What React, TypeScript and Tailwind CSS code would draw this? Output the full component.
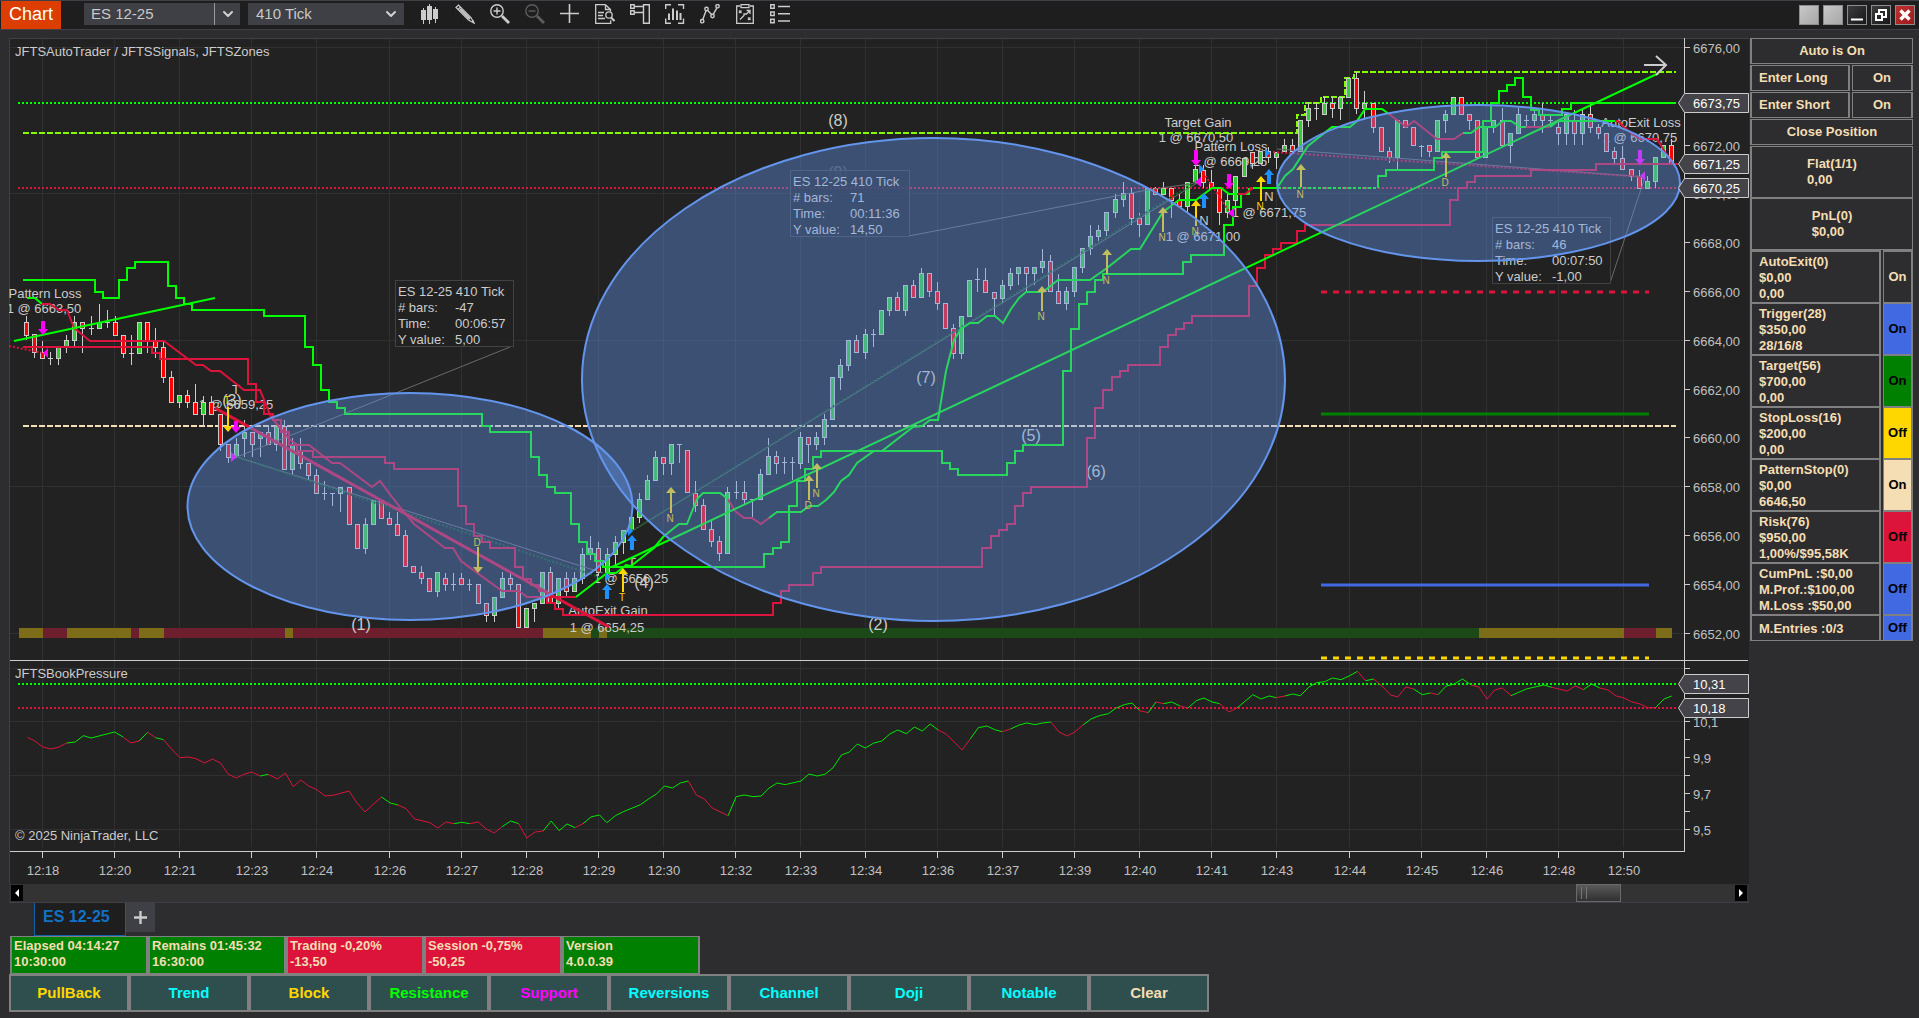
import type { ReactNode } from 'react';
import { ChevronDown } from 'lucide-react';

type Candle = [kind: 'g' | 'r', high: number, top: number, bottom: number, low: number];

const FIRST_BAR = 26.5;
const BAR_STEP = 8.063;

const LIME = '#00ff00';
const CRIMSON = '#dc143c';
const SILVER = '#cccccc';
const GOLD = '#ffd700';

const candles: Candle[] = [
  ['r', 316, 322, 335, 340], ['r', 334, 334, 352, 358], ['r', 341, 352, 358, 358], ['r', 352, 358, 358, 365],
  ['g', 347, 347, 358, 365], ['g', 335, 340, 347, 353], ['g', 316, 322, 340, 347], ['r', 322, 322, 328, 353],
  ['r', 316, 328, 328, 335], ['g', 304, 322, 328, 328], ['r', 310, 322, 322, 328], ['r', 316, 322, 335, 335],
  ['r', 335, 335, 353, 358], ['r', 335, 353, 353, 365], ['g', 322, 322, 353, 353], ['r', 322, 322, 341, 353],
  ['r', 328, 341, 347, 358], ['r', 341, 347, 377, 383], ['r', 371, 377, 402, 402], ['g', 395, 395, 402, 408],
  ['r', 390, 395, 402, 408], ['r', 384, 402, 414, 414], ['g', 396, 402, 414, 426], ['r', 396, 402, 414, 414],
  ['r', 414, 414, 444, 451], ['r', 444, 444, 457, 463], ['g', 438, 444, 457, 457], ['g', 420, 432, 438, 457],
  ['r', 432, 432, 444, 457], ['g', 432, 432, 438, 457], ['r', 426, 432, 444, 444], ['g', 426, 426, 444, 451],
  ['r', 420, 426, 469, 469], ['g', 438, 444, 469, 475], ['r', 438, 451, 463, 469], ['r', 463, 463, 475, 480],
  ['r', 469, 475, 493, 493], ['r', 481, 493, 493, 500], ['r', 493, 493, 493, 506], ['g', 487, 487, 493, 512],
  ['r', 487, 487, 524, 524], ['r', 524, 524, 548, 548], ['g', 518, 524, 548, 554], ['g', 500, 500, 524, 524],
  ['r', 500, 500, 518, 518], ['r', 512, 518, 524, 524], ['r', 512, 524, 535, 535], ['r', 530, 535, 566, 566],
  ['r', 566, 566, 572, 572], ['r', 566, 572, 578, 584], ['r', 578, 578, 591, 591], ['g', 572, 572, 591, 597],
  ['r', 573, 578, 584, 591], ['r', 573, 584, 584, 591], ['r', 573, 578, 584, 584], ['r', 579, 584, 584, 591],
  ['r', 584, 584, 603, 603], ['r', 603, 603, 615, 622], ['g', 597, 597, 615, 622], ['g', 572, 578, 597, 597],
  ['r', 573, 578, 584, 591], ['r', 584, 584, 627, 627], ['g', 608, 608, 627, 627], ['g', 603, 603, 608, 622],
  ['g', 572, 572, 603, 603], ['r', 567, 572, 603, 603], ['g', 578, 578, 603, 608], ['r', 572, 578, 591, 597],
  ['g', 572, 578, 591, 591], ['g', 548, 554, 578, 584], ['g', 536, 548, 554, 560], ['r', 542, 548, 572, 578],
  ['g', 548, 554, 572, 577], ['g', 536, 542, 554, 565], ['g', 530, 530, 542, 554], ['g', 517, 517, 530, 530],
  ['g', 493, 499, 517, 523], ['g', 475, 480, 499, 499], ['g', 451, 457, 480, 480], ['r', 457, 457, 463, 475],
  ['g', 444, 444, 463, 475], ['r', 444, 444, 444, 463], ['r', 450, 450, 492, 492], ['r', 481, 493, 505, 512],
  ['r', 499, 505, 529, 529], ['r', 520, 529, 541, 547], ['r', 536, 541, 553, 561], ['g', 487, 492, 553, 553],
  ['r', 481, 492, 492, 499], ['r', 481, 492, 499, 505], ['r', 499, 499, 499, 517], ['g', 469, 474, 499, 499],
  ['g', 438, 456, 474, 474], ['r', 451, 456, 463, 474], ['r', 457, 462, 462, 474], ['r', 457, 462, 462, 480],
  ['g', 432, 437, 463, 469], ['r', 437, 437, 444, 463], ['g', 432, 437, 444, 450], ['g', 414, 419, 437, 445],
  ['g', 377, 377, 419, 419], ['g', 359, 365, 377, 390], ['g', 340, 340, 365, 371], ['r', 335, 340, 352, 352],
  ['g', 329, 334, 352, 359], ['r', 329, 334, 334, 347], ['g', 310, 310, 334, 334], ['g', 297, 297, 310, 316],
  ['r', 292, 297, 310, 310], ['g', 285, 285, 310, 316], ['r', 280, 285, 297, 297], ['g', 268, 273, 297, 297],
  ['r', 273, 273, 291, 297], ['r', 282, 291, 303, 310], ['r', 303, 303, 328, 328], ['r', 324, 328, 353, 359],
  ['g', 316, 316, 353, 359], ['g', 280, 280, 316, 316], ['r', 268, 279, 279, 292], ['r', 268, 280, 292, 292],
  ['r', 292, 292, 298, 316], ['g', 280, 285, 298, 303], ['g', 268, 273, 285, 290], ['g', 267, 267, 273, 285],
  ['r', 267, 267, 273, 292], ['g', 267, 267, 273, 285], ['g', 249, 261, 267, 273], ['r', 255, 261, 291, 291],
  ['r', 274, 291, 303, 303], ['g', 287, 291, 303, 310], ['g', 267, 267, 291, 297], ['g', 248, 248, 267, 273],
  ['g', 225, 236, 248, 255], ['g', 225, 230, 236, 241], ['g', 212, 212, 230, 236], ['g', 194, 199, 212, 218],
  ['g', 182, 193, 199, 207], ['r', 188, 193, 218, 225], ['r', 213, 218, 224, 237], ['g', 188, 188, 224, 224],
  ['r', 187, 188, 194, 194], ['g', 182, 188, 194, 194], ['r', 188, 188, 200, 218], ['r', 194, 200, 206, 206],
  ['g', 182, 182, 206, 212], ['g', 165, 169, 182, 182], ['r', 165, 170, 182, 188], ['r', 170, 182, 188, 188],
  ['r', 188, 188, 212, 225], ['g', 194, 200, 212, 218], ['g', 176, 176, 200, 206], ['g', 158, 158, 176, 176],
  ['r', 152, 152, 163, 169], ['g', 151, 151, 163, 163], ['r', 147, 151, 157, 163], ['g', 152, 152, 157, 169],
  ['g', 139, 145, 151, 151], ['r', 139, 145, 151, 151], ['g', 120, 120, 151, 151], ['g', 103, 108, 120, 127],
  ['r', 103, 108, 108, 120], ['g', 97, 103, 114, 114], ['r', 97, 103, 108, 118], ['g', 97, 97, 108, 120],
  ['g', 78, 78, 97, 97], ['r', 72, 78, 108, 114], ['g', 91, 103, 108, 120], ['r', 103, 103, 127, 133],
  ['r', 127, 127, 151, 151], ['r', 147, 151, 157, 163], ['g', 120, 120, 157, 169], ['r', 120, 120, 127, 127],
  ['r', 127, 127, 145, 145], ['r', 145, 146, 146, 157], ['r', 145, 145, 151, 157], ['g', 120, 120, 151, 151],
  ['g', 110, 114, 120, 133], ['g', 97, 97, 114, 114], ['r', 97, 97, 114, 114], ['r', 114, 114, 120, 130],
  ['r', 120, 120, 157, 157], ['g', 126, 127, 157, 157], ['g', 120, 120, 127, 133], ['r', 108, 120, 145, 145],
  ['g', 133, 133, 145, 163], ['g', 108, 114, 133, 133], ['r', 115, 120, 120, 127], ['g', 108, 114, 120, 127],
  ['r', 103, 114, 120, 133], ['r', 114, 120, 120, 127], ['r', 122, 127, 133, 145], ['g', 114, 114, 133, 145],
  ['r', 110, 120, 133, 145], ['g', 108, 114, 133, 145], ['r', 103, 114, 127, 133], ['r', 124, 127, 133, 139],
  ['r', 133, 133, 151, 151], ['r', 147, 151, 158, 163], ['r', 146, 158, 169, 169], ['r', 169, 169, 176, 181],
  ['r', 170, 176, 188, 188], ['g', 176, 181, 188, 188], ['g', 157, 157, 181, 188], ['g', 145, 145, 157, 157],
  ['r', 139, 145, 163, 163],
];

const upperBand =
  'M23 280H95V292H103V298H119V280H127V268H135V262H168V286H176V298H184V304H192V310H264V316H305V347H313V365H321V390H329V402H337V408H345V414H482V426H490V432H531V457H539V475H547V487H555V493H571V524H579V542H587V554H595V561H603V567H764V554H773V548H781V542H789V506H797V481H805V469H813V457H821V451H942V463H950V469H958V475H1007V463H1015V451H1023V445H1063V371H1071V329H1079V304H1087V292H1095V280H1103V274H1183V262H1191V255H1224V225H1233V207H1241V194H1249V188';
const upperBandEnd =
  'M1378 188V176H1386V170H1434V158H1442V152H1483V121H1491V103H1499V91H1507V85H1515V78H1523V97H1531V110H1539V115H1562V109H1571V103H1676';
const lowerBand =
  'M23 347H152V353H160V359H248V384H256V402H264V414H273V420H281V432H289V445H297V451H313V457H385V463H394V469H458V506H466V524H474V536H482V542H490V548H515V567H523V579H531V585H539V591H547V603H555V609H563V615H773V603H781V591H789V585H813V573H821V567H982V548H991V536H999V530H1007V524H1015V506H1023V493H1031V487H1087V438H1095V408H1103V390H1112V377H1120V371H1128V365H1160V347H1168V335H1176V329H1184V323H1192V316H1249V286H1257V268H1265V255H1273V249H1281V243H1297V231H1305V225H1450V200H1458V188H1467V182H1475V176H1531V170H1596V164H1678';

// Moving average, coloured by direction
const average: [string, string][] = [
  [LIME, '27,298 35,298 42,304'],
  [CRIMSON, '42,304 50,304 59,310 67,310 74,328 90,341 164,341 196,365 203,365 211,371 220,371 244,390 260,390 271,417 290,440 298,445 309,445 332,463 340,463 372,487 380,481 392,497 400,507 414,524 445,548 453,548 461,561 502,591 519,591 527,597 576,597'],
  [LIME, '576,597 607,573 616,573 626,565 631,566 654,548 663,537 679,524 687,524 697,499 703,493 720,493 728,499'],
  [CRIMSON, '728,499 735,511 744,518 752,518 761,524 769,518'],
  [LIME, '769,518 777,512 801,512 809,506 818,506 826,500 834,492 841,481 849,475 857,463 874,451 882,451 913,427 922,426 930,420 938,420 946,371 954,340 961,329 970,323 978,323 987,316 995,316 1003,323 1011,309 1019,298 1026,292 1043,292 1058,280 1090,280 1107,268 1131,249 1140,249 1163,212 1179,200 1196,200 1212,188 1221,188 1229,194 1237,194'],
  [CRIMSON, '1237,194 1245,194 1253,188'],
  [LIME, '1253,188 1277,188 1285,176 1293,169 1308,146 1332,127 1350,127 1357,121 1365,109 1382,109 1389,114'],
  [CRIMSON, '1389,114 1406,127 1414,121 1437,139 1454,139 1463,133'],
  [LIME, '1463,133 1471,133 1479,127 1495,127 1503,121 1511,121 1520,127 1526,127'],
  [CRIMSON, '1526,127 1550,127'],
  [LIME, '1550,127 1558,121 1615,121'],
  [CRIMSON, '1615,121 1618,121 1624,127 1631,133 1640,139 1657,139 1665,152 1673,163'],
];

// Two halves of the pressure series, each in its own sample units
const pressureLeft: ['g' | 'r', string][] = [
  ['r', '45,292 57,303 70,321 83,327 95,322 109,309'],
  ['g', '109,309 123,306 136,287 149,294 187,276 201,291'],
  ['r', '201,291 214,309 227,303'],
  ['g', '227,303 241,277'],
  ['r', '241,277 254,293'],
  ['g', '254,293 267,299'],
  ['r', '267,299 280,327 294,353 307,351 320,356 334,369 347,357 360,369 373,403 386,414 398,403 411,396 425,408'],
  ['g', '425,408 438,403'],
  ['r', '438,403 453,417 466,399 479,440 491,420 504,438 518,450 531,468 544,466 570,453 583,489 596,516 610,492 623,471'],
  ['g', '623,471 637,489 650,495'],
  ['r', '650,495 663,506 677,537 702,548 715,564 728,546 741,551'],
  ['g', '741,551 754,547 767,551'],
  ['r', '767,551 781,546 794,567 807,579 820,560'],
  ['g', '820,560 834,543 847,551'],
  ['r', '847,551 860,594 874,576 887,573'],
  ['g', '887,573 900,543 913,572 926,552 939,563'],
  ['r', '939,563 952,551'],
  ['g', '952,551 965,531 979,525 991,548 1005,527 1018,515 1046,494 1059,477 1072,462 1085,438 1098,444 1111,429 1124,423'],
  ['r', '1124,423 1137,465 1150,477 1163,504 1189,527'],
  ['g', '1189,527 1202,470 1215,465 1230,470 1243,468 1256,444 1269,429 1282,434 1308,423 1321,402 1334,408 1347,403 1360,384 1374,345 1387,336 1400,312 1413,324 1427,309 1440,303 1453,282 1466,270 1480,281 1493,261 1506,273 1519,252 1532,270'],
  ['r', '1532,270 1545,282 1571,330'],
];
const pressureRight: ['g' | 'r', string][] = [
  ['r', '4,330 20,297'],
  ['g', '20,297 36,263 53,258 68,269 83,275'],
  ['r', '83,275 99,267'],
  ['g', '99,267 116,255 131,249 147,254 162,249 178,246'],
  ['r', '178,246 194,276 210,288 225,276 241,255'],
  ['g', '241,255 257,237 273,227 291,221 305,205 322,194 337,189 352,212'],
  ['r', '352,212 369,218'],
  ['g', '369,218 384,186'],
  ['r', '384,186 399,191'],
  ['g', '399,191 415,186 431,198'],
  ['r', '431,198 447,204'],
  ['g', '447,204 463,182 478,174 494,186 509,191'],
  ['r', '509,191 527,216 543,204'],
  ['g', '543,204 574,164 590,177 606,168 620,173'],
  ['r', '620,173 637,168'],
  ['g', '637,168 652,162 667,167 684,141 699,128 715,125 730,114 747,119 764,107 779,94'],
  ['r', '779,94 795,122'],
  ['g', '795,122 811,117'],
  ['r', '811,117 827,138 844,165 858,171 874,141 889,147'],
  ['g', '889,147 906,164 922,159'],
  ['r', '922,159 937,164'],
  ['g', '937,164 953,138 969,132 985,117 1002,135'],
  ['r', '1002,135 1017,141 1033,177 1048,150 1063,144 1080,167'],
  ['g', '1080,167 1110,147 1144,135 1160,142'],
  ['r', '1160,142 1190,153 1206,138 1222,149'],
  ['g', '1222,149 1238,132 1254,144'],
  ['r', '1254,144 1270,150 1286,168 1300,173 1316,185 1333,192 1348,203 1363,203'],
  ['g', '1363,203 1380,177 1395,168'],
];

const times: [number, string][] = [
  [42.5, '12:18'], [114.5, '12:20'], [179.5, '12:21'], [251.5, '12:23'], [316.5, '12:24'], [389.5, '12:26'],
  [461.5, '12:27'], [526.5, '12:28'], [598.5, '12:29'], [663.5, '12:30'], [735.5, '12:32'], [800.5, '12:33'],
  [865.5, '12:34'], [937.5, '12:36'], [1002.5, '12:37'], [1074.5, '12:39'], [1139.5, '12:40'], [1211.5, '12:41'],
  [1276.5, '12:43'], [1349.5, '12:44'], [1421.5, '12:45'], [1486.5, '12:46'], [1558.5, '12:48'], [1623.5, '12:50'],
];

const prices: [number, string][] = [
  [47.5, '6676,00'], [96.5, '6674,00'], [145.5, '6672,00'], [193.5, '6670,00'], [242.5, '6668,00'],
  [291.5, '6666,00'], [340.5, '6664,00'], [389.5, '6662,00'], [437.5, '6660,00'], [486.5, '6658,00'],
  [535.5, '6656,00'], [584.5, '6654,00'], [633.5, '6652,00'],
];

const pressureTicks: [number, string][] = [
  [668.5, ''], [721.5, '10,1'], [739.5, ''], [757.5, '9,9'], [775.5, ''], [793.5, '9,7'], [811.5, ''], [829.5, '9,5'],
];

const tags: [number, string][] = [
  [103, '6673,75'], [164, '6671,25'], [188, '6670,25'], [684, '10,31'], [708, '10,18'],
];

const zones: [number, number, string][] = [
  [19, 43, '#7d6c18'], [43, 67, '#6e1f2d'], [67, 131, '#7d6c18'], [131, 139, '#6e1f2d'], [139, 164, '#7d6c18'],
  [164, 285, '#6e1f2d'], [285, 293, '#7d6c18'], [293, 543, '#6e1f2d'], [543, 591, '#7d6c18'], [591, 599, '#1b4a18'],
  [599, 607, '#7d6c18'], [607, 1479, '#1b4a18'], [1479, 1624, '#7d6c18'], [1624, 1656, '#6e1f2d'], [1656, 1672, '#7d6c18'],
];

const tradeLabels: [number, number, string][] = [
  [45, 298, 'Pattern Loss'], [44, 313, '1 @ 6663,50'], [236, 409, '1 @ 6659,25'], [236, 394, 'T'],
  [631, 583, '1 @ 6656,25'], [608, 615, 'AutoExit Gain'], [607, 632, '1 @ 6654,25'], [632, 567, 'T'],
  [1198, 127, 'Target Gain'], [1196, 142, '1 @ 6670,50'], [1231, 151, 'Pattern Loss'], [1230, 166, '1 @ 6669,25'],
  [1269, 217, '1 @ 6671,75'], [1203, 241, '1 @ 6671,00'], [1204, 225, 'N'], [1269, 201, 'N'],
  [1641, 127, 'AutoExit Loss'], [1640, 142, '1 @ 6670,75'],
];

const zoneNumbers: [number, number, string][] = [
  [361, 630, '(1)'], [878, 630, '(2)'], [232, 406, '(3)'], [644, 588, '(4)'],
  [1031, 441, '(5)'], [1096, 477, '(6)'], [926, 383, '(7)'], [838, 126, '(8)'],
];

const setups: [x: number, tip: number, tail: number, letterY: number, letter: string][] = [
  [228, 432, 407, 404, 'T'], [478, 573, 547, 546, 'D'], [623, 568, 592, 601, 'T'], [671, 487, 513, 522, 'N'],
  [809, 475, 500, 509, 'D'], [817, 463, 488, 497, 'N'], [1042, 286, 311, 320, 'N'], [1107, 249, 274, 284, 'N'],
  [1163, 207, 232, 241, 'N'], [1196, 200, 226, 235, 'N'], [1261, 176, 201, 210, 'N'], [1301, 164, 187, 198, 'N'],
  [1446, 152, 177, 186, 'D'],
];

const entries: [x: number, tip: number, tail: number, color: string][] = [
  [43, 335, 321, '#ff00ff'], [236, 433, 421, '#ff00ff'], [1196, 166, 150, '#ff00ff'], [1229, 189, 174, '#ff00ff'],
  [1640, 165, 150, '#ff00ff'], [632, 535, 550, '#1e90ff'], [607, 584, 599, '#1e90ff'], [1204, 193, 208, '#1e90ff'],
  [1269, 169, 184, '#1e90ff'],
];

const measures: { x: number; y: number; w: number; bars: string; time: string; value: string }[] = [
  { x: 395, y: 280, w: 118, bars: '-47', time: '00:06:57', value: '5,00' },
  { x: 790, y: 170, w: 119, bars: '71', time: '00:11:36', value: '14,50' },
  { x: 1492, y: 217, w: 118, bars: '46', time: '00:07:50', value: '-1,00' },
];

const SetupArrow = ({ x, tip, tail }: { x: number; tip: number; tail: number }) => {
  const d = tip < tail ? 1 : -1;
  return <path d={`M${x} ${tip}l5 ${6 * d}h-4V${tail}h-2V${tip + 6 * d}h-4z`} fill={GOLD} />;
};

const EntryArrow = ({ x, tip, tail, color }: { x: number; tip: number; tail: number; color: string }) => {
  const d = tip < tail ? 1 : -1;
  return <path d={`M${x} ${tip}l5 ${6 * d}h-3V${tail}h-4V${tip + 6 * d}h-3z`} fill={color} />;
};

const Chart = () => (
  <svg viewBox="9 38 1740 846" className="block h-auto w-full bg-[#222222] font-['Liberation_Sans',Arial,sans-serif] text-[13px]">
    {/* grid */}
    <g stroke="#303032" shapeRendering="crispEdges">
      {times.map(([x]) => <line key={x} x1={x} x2={x} y1={38} y2={847} />)}
      {[47.5, 193.5, 340.5, 486.5, 633.5, 668.5, 721.5, 775.5, 829.5].map((y) => (
        <line key={y} x1={10} x2={1684} y1={y} y2={y} />
      ))}
    </g>
    <path d="M9.500 884V38.500H1749" fill="none" stroke="#3f3f46" />

    <g fill={SILVER}>
      <text x={15} y={56}>JFTSAutoTrader / JFTSSignals, JFTSZones</text>
      <text x={15} y={678}>JFTSBookPressure</text>
      <text x={15} y={840}>© 2025 NinjaTrader, LLC</text>
    </g>

    {/* trend strip */}
    <g shapeRendering="crispEdges">
      {zones.map(([from, to, color]) => <rect key={from} x={from} y={628} width={to - from} height={10} fill={color} />)}
    </g>

    <g fill={SILVER} textAnchor="middle">
      {tradeLabels.map(([x, y, label]) => <text key={`${x}-${y}`} x={x} y={y}>{label}</text>)}
    </g>
    <g fill={SILVER} textAnchor="middle" className="text-[16px]">
      {zoneNumbers.map(([x, y, label]) => <text key={label} x={x} y={y}>{label}</text>)}
      <text x={838} y={178} opacity={0.3}>(9)</text>
    </g>

    {/* levels */}
    <g fill="none" strokeWidth={2}>
      <path d="M18 103H1571" stroke={LIME} strokeDasharray="2 2" />
      <path d="M18 188H1676" stroke={CRIMSON} strokeDasharray="2 2" />
      <path d="M1253 188H1378" stroke={LIME} strokeDasharray="3 2" />
      <path d="M23 426H1676" stroke="#f5deb3" strokeDasharray="6 2" />
      <path d="M23 133H1297V115H1305V103H1321V97H1345V78H1354V72H1676" stroke="#7fff00" strokeDasharray="6 2" />
      <path d="M18 684H1678" stroke={LIME} strokeDasharray="2 2" />
      <path d="M18 708H1678" stroke={CRIMSON} strokeDasharray="2 2" />
    </g>
    <g fill="none" strokeWidth={3}>
      <path d="M1321 292H1649" stroke={CRIMSON} strokeDasharray="6 6" />
      <path d="M1321 414H1649" stroke="#008000" />
      <path d="M1321 585H1649" stroke="#4169e1" />
      <path d="M1321 658H1649" stroke={GOLD} strokeDasharray="6 6" />
    </g>

    {/* candles */}
    <g shapeRendering="crispEdges" stroke={SILVER}>
      {candles.map(([kind, high, top, bottom, low], i) => {
        const x = Math.floor(FIRST_BAR + BAR_STEP * i) + 0.5;
        if (top === bottom) {
          return <path key={i} d={`M${x} ${high}V${low}M${x - 2.5} ${top + 0.5}h5`} />;
        }
        return (
          <g key={i}>
            <path d={`M${x} ${high}V${low}`} />
            <rect x={x - 2} y={top + 0.5} width={4} height={bottom - top} fill={kind === 'g' ? '#32cd32' : '#ff0000'} />
          </g>
        );
      })}
    </g>

    {/* measuring rulers */}
    <g fill="none" stroke="#6a6a6a">
      <path d="M510 347L237 457L603 573M909 236L1147 190L1197 183L632 531M1610 283L1645 177L1277 149" />
    </g>
    <g fill="none" strokeWidth={2} strokeDasharray="2 2">
      <path d="M237 457L605 579M632 531L1197 181" stroke="#145c1e" />
      <path d="M9 346L43 353M1201 169L1230 213M1273 152L1645 177" stroke={CRIMSON} />
    </g>
    {measures.map((m) => (
      <g key={m.x} fill={SILVER}>
        <rect x={m.x + 0.5} y={m.y + 0.5} width={m.w} height={66} fill="#222222" fillOpacity={0.8} stroke="#424244" />
        <text x={m.x + 3} y={m.y + 16}>ES 12-25 410 Tick</text>
        <text x={m.x + 3} y={m.y + 32}># bars:</text>
        <text x={m.x + 60} y={m.y + 32}>{m.bars}</text>
        <text x={m.x + 3} y={m.y + 48}>Time:</text>
        <text x={m.x + 60} y={m.y + 48}>{m.time}</text>
        <text x={m.x + 3} y={m.y + 64}>Y value:</text>
        <text x={m.x + 60} y={m.y + 64}>{m.value}</text>
      </g>
    ))}

    {/* bands and averages */}
    <g fill="none" strokeWidth={2}>
      <path d={lowerBand} stroke={CRIMSON} />
      <path d={upperBand} stroke={LIME} />
      <path d={upperBandEnd} stroke={LIME} />
      {average.map(([color, points]) => <polyline key={points} points={points} stroke={color} />)}
      <path d="M14 341L215 298M612 567L1659 73" stroke={LIME} />
      <path d="M215 408L609 627" stroke={CRIMSON} strokeWidth={3} />
      <path d="M1644 65H1665M1656 56L1666 65L1656 75" stroke={SILVER} strokeWidth={2} />
    </g>

    {/* markers */}
    {setups.map(([x, tip, tail, letterY, letter]) => (
      <g key={`${x}-${tip}`}>
        <SetupArrow x={x} tip={tip} tail={tail} />
        <text x={x - 1} y={letterY} fill={GOLD} textAnchor="middle" className="text-[10px]">{letter}</text>
      </g>
    ))}
    {entries.map(([x, tip, tail, color]) => <EntryArrow key={`${x}-${tip}`} x={x} tip={tip} tail={tail} color={color} />)}
    <path d="M43 353l5 -5v10zM237 457l-6 -5v10zM1195 182l6 -5v10zM1228 213l6 -5v10zM1640 176l5 -5v10z" fill="#ff00ff" />
    <path d="M1204 169l-5 -5v10zM1270 153l-5 -5v10zM633 531l-5 -5v10zM610 577l-5 -5v10z" fill="#1e90ff" />

    {/* highlighted trades */}
    <g fill="#6495ed" fillOpacity={0.4} stroke="#6495ed" strokeWidth={2}>
      <ellipse cx={410} cy={506.5} rx={222.5} ry={113.5} />
      <ellipse cx={933.5} cy={379.5} rx={351.5} ry={241.5} />
      <ellipse cx={1478.5} cy={183} rx={201.5} ry={78} />
    </g>

    {/* book pressure */}
    <g fill="none" strokeWidth={1}>
      <g transform="translate(0 640) scale(0.6124 0.3333)">
        {pressureLeft.map(([kind, points]) => (
          <polyline key={points} points={points} vectorEffect="non-scaling-stroke" stroke={kind === 'g' ? '#00e800' : CRIMSON} />
        ))}
      </g>
      <g transform="translate(960 640) scale(0.5102 0.3333)">
        {pressureRight.map(([kind, points]) => (
          <polyline key={points} points={points} vectorEffect="non-scaling-stroke" stroke={kind === 'g' ? '#00e800' : CRIMSON} />
        ))}
      </g>
    </g>

    {/* axes */}
    <g stroke={SILVER} shapeRendering="crispEdges">
      <path d="M10 660.500H1748M10 851.500H1685M1684.500 38V852" />
      {[...prices, ...pressureTicks].map(([y]) => <path key={y} d={`M1684 ${y}h6`} />)}
      {times.map(([x]) => <path key={x} d={`M${x} 852v6`} />)}
    </g>
    <g fill="#c0c0c0">
      {[...prices, ...pressureTicks].map(([y, label]) => <text key={y} x={1693} y={y + 5.5}>{label}</text>)}
    </g>
    <g fill="#c0c0c0" textAnchor="middle">
      {times.map(([x, label]) => <text key={x} x={x + 0.5} y={875}>{label}</text>)}
    </g>
    {tags.map(([y, label]) => (
      <g key={label}>
        <path d={`M1678.500 ${y}l6 -9.500H1748.500v19H1684.500z`} fill="#434349" stroke={SILVER} />
        <text x={1693} y={y + 5} fill="#ffffff">{label}</text>
      </g>
    ))}
  </svg>
);

const tools: { label: string; dim?: boolean; icon: ReactNode }[] = [
  {
    label: 'Chart style',
    icon: <path fill="currentColor" d="M3 4h1v2h2v10H4v4H3v-4H1V6h2zM9 0h1v2h2v14h-2v4H9v-4H7V2h2zM15 3h1v2h2v10h-2v4h-1v-4h-2V5h2z" />,
  },
  {
    label: 'Drawing tools',
    icon: (
      <g>
        <path d="M1 3.500L3.500 1L16 13.500L19 19L13.500 16zM3 5.500L5.500 3" strokeWidth="1.200" />
        <path d="M5 5l10 10" strokeWidth="2" />
        <path d="M17 17.500l2.500 2.500l-1 -4z" fill="currentColor" />
      </g>
    ),
  },
  {
    label: 'Zoom in',
    icon: (
      <g>
        <circle cx="7" cy="7" r="6.200" strokeWidth="1.400" />
        <path d="M3.500 7h7M7 3.500v7" strokeWidth="1.400" />
        <path d="M12 12l7 7" strokeWidth="2.800" />
      </g>
    ),
  },
  {
    label: 'Zoom out',
    dim: true,
    icon: (
      <g>
        <circle cx="7" cy="7" r="6.200" strokeWidth="1.400" />
        <path d="M3.500 7h7" strokeWidth="1.400" />
        <path d="M12 12l7 7" strokeWidth="2.800" />
      </g>
    ),
  },
  { label: 'Cross hair', icon: <path d="M0 9.500h19M9.500 0v19" strokeWidth="1.600" /> },
  {
    label: 'Data box',
    icon: (
      <g strokeWidth="1.300">
        <path d="M10.500 .7H.7v18.600h15v-3M10.500 .7l5 4.800v2M10.500 .7v4.800h5" />
        <circle cx="14" cy="11" r="3.200" />
        <path d="M16 13.500l3.500 3.500" strokeWidth="2" />
        <path d="M3 8.500h6M3 11.500h5M3 14.500h7" />
      </g>
    ),
  },
  {
    label: 'Chart trader',
    icon: <path d="M.7 .7h3.500v3.500H.7zM.7 6.700h3.500v3.500H.7zM4 2.500h9M4 8.500h9M13.500 .7h5.800v18.600h-5.800z" strokeWidth="1.400" />,
  },
  {
    label: 'Data series',
    icon: (
      <g>
        <path d="M6 .7H.7V5M13 .7h5.500V5M.7 14.500v4.800H6M18.500 14.500v4.800H13" strokeWidth="1.400" />
        <path d="M4 16V9.500M8 16V4.500M12 16V6.500M15.500 16V9" strokeWidth="2" />
      </g>
    ),
  },
  {
    label: 'Indicators',
    icon: (
      <g strokeWidth="1.400">
        <circle cx="2.200" cy="17.200" r="1.700" />
        <circle cx="6.500" cy="5" r="1.700" />
        <circle cx="12.500" cy="12" r="1.700" />
        <circle cx="17.500" cy="2.200" r="1.700" />
        <path d="M2.800 15.500L6 6.700M7.500 6.300l4 4.300M13.200 10.400l3.700 -6.600" />
      </g>
    ),
  },
  {
    label: 'Strategies',
    icon: (
      <g strokeWidth="1.300">
        <path d="M5 2H1.700v17.300h16.600V2H15M6 .7h8v3H6z" />
        <path d="M4 6.500l2.500 2.500M6.500 6.500L4 9M13 13.500l2.500 2.500M15.500 13.500L13 16M5 15.500l4 -4v-1.500h2.500L14.500 7M11.500 6.500h3.500v3.500" />
      </g>
    ),
  },
  {
    label: 'Properties',
    icon: <path d="M.7 .7h3.500v3.500H.7zM.7 8h3.500v3.500H.7zM.7 15.300h3.500v3.500H.7zM8 2.500h12M8 9.700h12M8 17h12" strokeWidth="1.400" />,
  },
];

const Toolbar = () => (
  <header className="flex h-[30px] border-y border-[#3f3f46] bg-[#1e1e1e] pl-px">
    <h1 className="flex w-[60px] items-center justify-center bg-[#dc3d00] pb-[2px] text-lg leading-5 text-white">Chart</h1>
    <div className="mb-[2px] flex flex-1 items-center">
      <div className="relative ml-[23px]">
        <select aria-label="Instrument" className="block h-[22px] w-[156px] appearance-none bg-[#3f3f46] pl-[7px] text-[15px] leading-5 text-[#c8c8c8]">
          <option>ES 12-25</option>
        </select>
        <span className="pointer-events-none absolute inset-y-0 right-0 flex w-[26px] items-center justify-center border-l border-[#999999] text-[#d0d0d0]">
          <ChevronDown className="h-4 w-4" strokeWidth={3} />
        </span>
      </div>
      <div className="relative ml-2">
        <select aria-label="Interval" className="block h-[22px] w-[156px] appearance-none bg-[#3f3f46] pl-2 text-[15px] leading-5 text-[#c8c8c8]">
          <option>410 Tick</option>
        </select>
        <span className="pointer-events-none absolute inset-y-0 right-0 flex w-[26px] items-center justify-center text-[#d0d0d0]">
          <ChevronDown className="h-4 w-4" strokeWidth={3} />
        </span>
      </div>
      <div className="ml-[16px] flex gap-[15px]">
        {tools.map((tool) => (
          <button key={tool.label} aria-label={tool.label} className={tool.dim ? 'text-[#5c5c5c]' : 'text-[#cccccc]'}>
            <svg viewBox="0 0 20 20" className="block h-5 w-5" fill="none" stroke="currentColor" strokeWidth="0">
              {tool.icon}
            </svg>
          </button>
        ))}
      </div>
      <div className="mt-px mr-1 ml-auto flex gap-1">
        <button aria-label="Link instrument" className="h-5 w-5 border border-[#8c8c8c] bg-gradient-to-br from-[#c8c8c8] to-[#a8a6a8]" />
        <button aria-label="Link interval" className="h-5 w-5 border border-[#8c8c8c] bg-gradient-to-br from-[#c8c8c8] to-[#a8a6a8]" />
        <button aria-label="Minimize" className="h-5 w-5 border border-[#8c8c8c] bg-gradient-to-br from-[#3c3c3e] to-[#18181a]">
          <svg viewBox="0 0 18 18" className="block h-full w-full"><path d="M3 13.500h12" stroke="#fff" strokeWidth="2" /></svg>
        </button>
        <button aria-label="Restore" className="h-5 w-5 border border-[#8c8c8c] bg-gradient-to-br from-[#3c3c3e] to-[#18181a]">
          <svg viewBox="0 0 18 18" className="block h-full w-full" fill="none" stroke="#fff" strokeWidth="2">
            <path d="M7 7V4h7v7h-3M4 8h6v6H4z" />
          </svg>
        </button>
        <button aria-label="Close" className="h-5 w-5 border border-[#8c8c8c] bg-gradient-to-br from-[#c03030] to-[#9c1a1e]">
          <svg viewBox="0 0 18 18" className="block h-full w-full"><path d="M4.500 4.500l9 9M13.500 4.500l-9 9" stroke="#fff" strokeWidth="3.400" /></svg>
        </button>
      </div>
    </div>
  </header>
);

const controls: { lines: string[]; state: string; tone: string }[] = [
  { lines: ['AutoExit(0)', '$0,00', '0,00'], state: 'On', tone: 'text-[#f5deb3]' },
  { lines: ['Trigger(28)', '$350,00', '28/16/8'], state: 'On', tone: 'bg-[#4169e1] text-black' },
  { lines: ['Target(56)', '$700,00', '0,00'], state: 'On', tone: 'bg-[#008000] text-black' },
  { lines: ['StopLoss(16)', '$200,00', '0,00'], state: 'Off', tone: 'bg-[#ffd700] text-black' },
  { lines: ['PatternStop(0)', '$0,00', '6646,50'], state: 'On', tone: 'bg-[#f5deb3] text-black' },
  { lines: ['Risk(76)', '$950,00', '1,00%/$95,58K'], state: 'Off', tone: 'bg-[#dc143c] text-black' },
  { lines: ['CumPnL :$0,00', 'M.Prof.:$100,00', 'M.Loss :$50,00'], state: 'Off', tone: 'bg-[#4169e1] text-black' },
  { lines: ['M.Entries :0/3'], state: 'Off', tone: 'bg-[#4169e1] text-black' },
];

const TraderPanel = () => (
  <aside className="ml-px w-[163px] shrink-0 text-[13px] leading-4 font-bold text-[#f5deb3]">
    <div className="flex flex-col gap-px">
      <button className="h-[26px] border border-l-2 border-[#808080]">Auto is On</button>
      {['Enter Long', 'Enter Short'].map((side) => (
        <div key={side} className="flex h-[26px] gap-[2px]">
          <button className="w-[100px] border border-x-2 border-[#808080] pl-[7px] text-left">{side}</button>
          <button aria-label={`${side} on`} className="flex-1 border border-r-2 border-[#808080]">On</button>
        </div>
      ))}
      <button className="h-[26px] border border-l-2 border-[#808080]">Close Position</button>
    </div>
    <div className="mt-px flex h-[52px] items-center justify-center border border-l-2 border-[#808080]">
      <p>Flat(1/1)<br />0,00</p>
    </div>
    <div className="flex h-[52px] items-center justify-center border border-l-2 border-[#808080]">
      <p>PnL(0)<br />$0,00</p>
    </div>
    <div className="border-b border-[#808080]">
      {controls.map(({ lines, state, tone }) => (
        <div key={lines[0]} className="flex min-h-[26px] gap-[2px]">
          <button className="w-[131px] border-x-2 border-t-2 border-[#808080] pt-[2px] pl-[7px] text-left">
            {lines.map((line) => <span key={line} className="block whitespace-nowrap">{line}</span>)}
          </button>
          <button aria-label={`${lines[0]} ${state}`} className={`flex-1 border-t-2 border-r-2 border-l border-[#808080] ${tone}`}>{state}</button>
        </div>
      ))}
    </div>
  </aside>
);

const session: [string, string, string][] = [
  ['Elapsed 04:14:27', '10:30:00', 'bg-[#008000]'],
  ['Remains 01:45:32', '16:30:00', 'bg-[#008000]'],
  ['Trading -0,20%', '-13,50', 'bg-[#dc143c]'],
  ['Session -0,75%', '-50,25', 'bg-[#dc143c]'],
  ['Version', '4.0.0.39', 'bg-[#008000]'],
];

const patterns: [string, string][] = [
  ['PullBack', 'text-[#ffd700]'],
  ['Trend', 'text-[#00ffff]'],
  ['Block', 'text-[#ffd700]'],
  ['Resistance', 'text-[#00ff00]'],
  ['Support', 'text-[#ff00ff]'],
  ['Reversions', 'text-[#00ffff]'],
  ['Channel', 'text-[#00ffff]'],
  ['Doji', 'text-[#00ffff]'],
  ['Notable', 'text-[#00ffff]'],
  ['Clear', 'text-[#f5deb3]'],
];

export default function App() {
  return (
    <div className="min-h-screen bg-[#2d2d30] font-['Liberation_Sans',Arial,sans-serif]">
      <Toolbar />
      <main className="flex items-start pt-2 pr-[6px] pl-[9px]">
        <div className="min-w-0 flex-1">
          <Chart />
          <div className="flex h-[19px] items-center border-b border-[#3f3f46] bg-[#333333] px-[2px]">
            <button aria-label="Scroll left" className="h-4 w-3 bg-black">
              <svg viewBox="0 0 12 16" className="block"><path d="M8 4v8L4 8z" fill="#fff" /></svg>
            </button>
            <div className="mr-[114px] ml-auto flex h-[18px] w-[45px] items-center gap-1 border border-[#6a6a6a] bg-gradient-to-b from-[#5a5a5a] to-[#303030] pl-1">
              <span className="h-3 w-px bg-[#777777]" />
              <span className="h-3 w-px bg-[#777777]" />
            </div>
            <button aria-label="Scroll right" className="h-4 w-3 bg-black">
              <svg viewBox="0 0 12 16" className="block"><path d="M4 4v8l4 -4z" fill="#fff" /></svg>
            </button>
          </div>
          <div className="ml-[25px] flex items-start">
            <button className="h-[33px] w-[92px] border border-t-0 border-[#0e60a8] bg-[#1e1e1e] pb-1 pl-2 text-left text-base font-bold text-[#1072c6]">ES 12-25</button>
            <button aria-label="Add tab" className="flex h-[29px] w-[29px] items-center justify-center bg-[#3f3f46]">
              <svg viewBox="0 0 13 13" className="h-[13px] w-[13px]"><path d="M0 6.500h13M6.500 0v13" stroke="#ccc" strokeWidth="2.400" /></svg>
            </button>
          </div>
        </div>
        <TraderPanel />
      </main>
      <footer className="pb-[6px] pl-[9px]">
        <dl className="ml-px flex text-[13px] leading-4 font-bold text-[#f5deb3]">
          {session.map(([name, value, tone]) => (
            <div key={name} className={`h-[38px] w-[138px] border border-x-2 border-[#808080] pt-px pl-[2px] ${tone}`}>
              <dt>{name}</dt>
              <dd>{value}</dd>
            </div>
          ))}
        </dl>
        <div className="flex">
          {patterns.map(([name, tone]) => (
            <button key={name} className={`h-[38px] w-[120px] border-2 border-[#808080] bg-[#2f4f4f] text-[15px] font-bold ${tone}`}>{name}</button>
          ))}
        </div>
      </footer>
    </div>
  );
}
